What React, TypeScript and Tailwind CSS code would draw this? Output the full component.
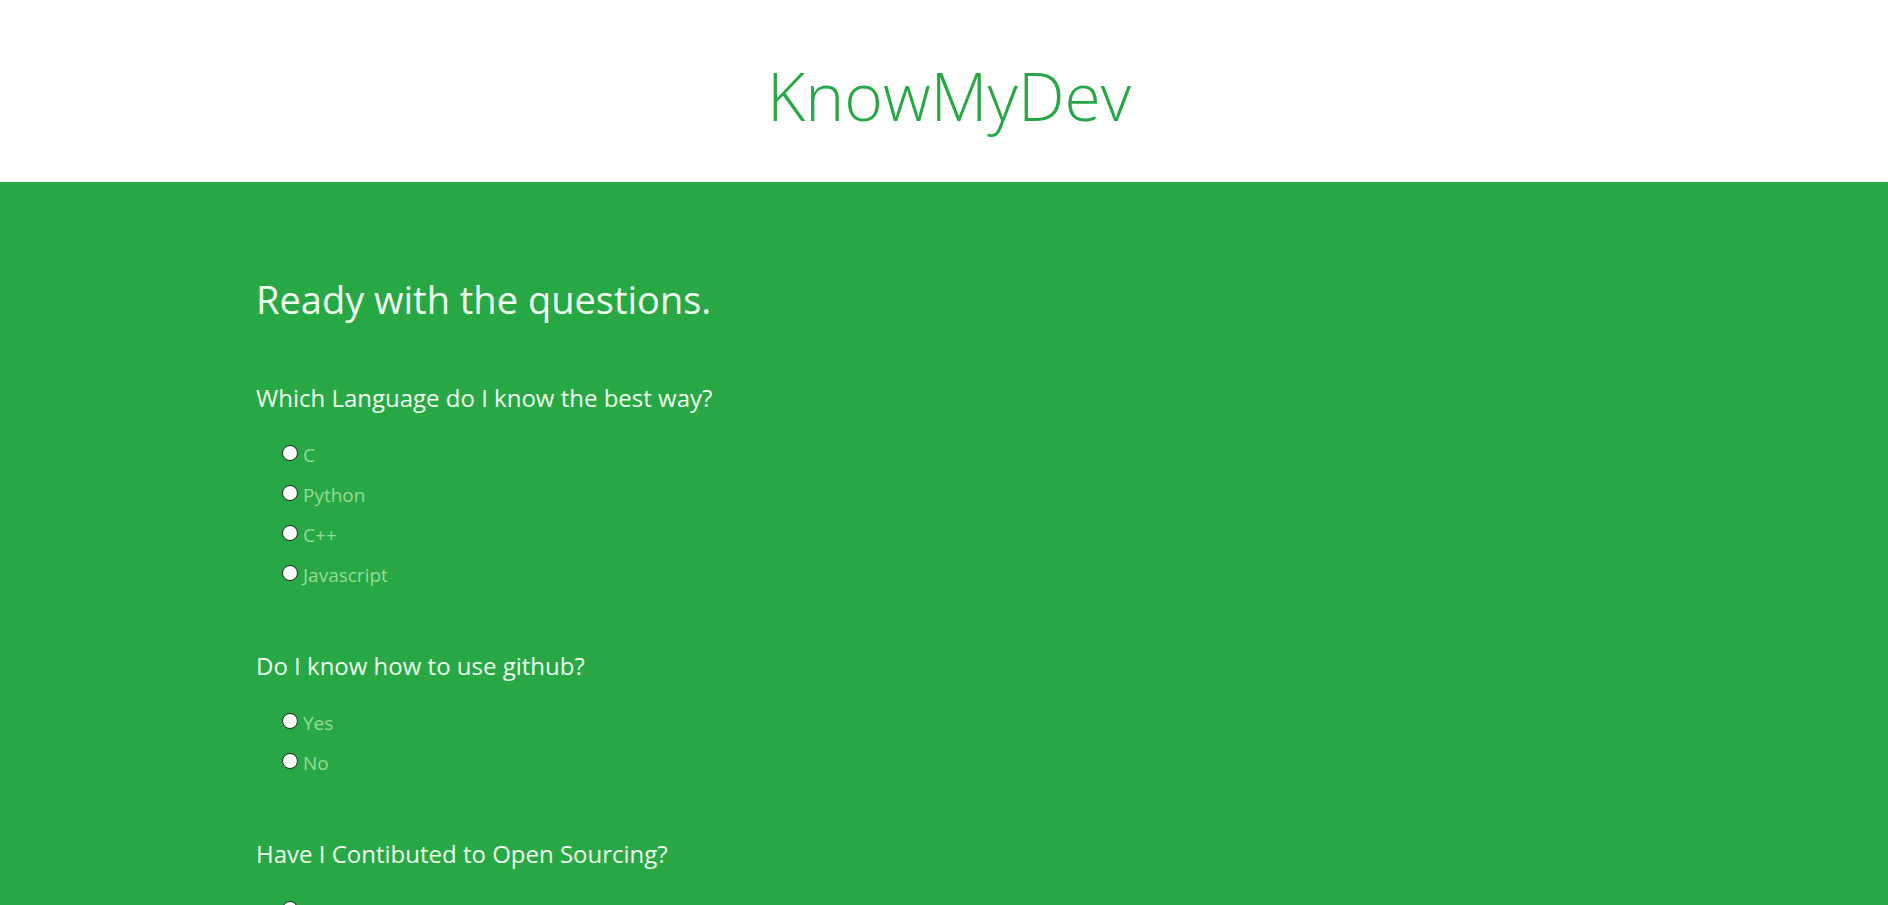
const questions = [
  {
    title: "Which Language do I know the best way?",
    options: ["C", "Python", "C++", "Javascript"],
  },
  {
    title: "Do I know how to use github?",
    options: ["Yes", "No"],
  },
  {
    title: "Have I Contibuted to Open Sourcing?",
    options: ["Yes", "No"],
  },
];

const App = () => {
  return (
    <div className="min-h-screen bg-[#28a745] font-['Open_Sans',sans-serif]">
      <header className="h-[182px] bg-white flex items-center justify-center pl-[10px]">
        <h1 className="text-[#28a745] text-[66px] font-light leading-none pt-[8px]">
          KnowMyDev
        </h1>
      </header>

      <main className="pl-[256px] pt-[93px] pb-20">
        <h1 className="text-[#f0fff0] text-[38px] leading-[48px]">
          Ready with the questions.
        </h1>

        {questions.map((q, qi) => (
          <div key={qi} className={qi === 0 ? "mt-[59px]" : "mt-[55px]"}>
            <h4 className="text-[#f0fff0] text-[24px] leading-[32px]">
              {q.title}
            </h4>
            <ul className="mt-[21px] pl-[26px]">
              {q.options.map((opt, oi) => (
                <li key={oi} className="flex items-center h-[40px]">
                  <input
                    type="radio"
                    name={"q" + qi}
                    className="appearance-none w-[16px] h-[16px] rounded-full bg-white border border-[#222] mb-[4px]"
                  />
                  <label className="ml-[5px] text-[#98dc98] text-[19px]">
                    {opt}
                  </label>
                </li>
              ))}
            </ul>
          </div>
        ))}
      </main>
    </div>
  );
};

export default App;
